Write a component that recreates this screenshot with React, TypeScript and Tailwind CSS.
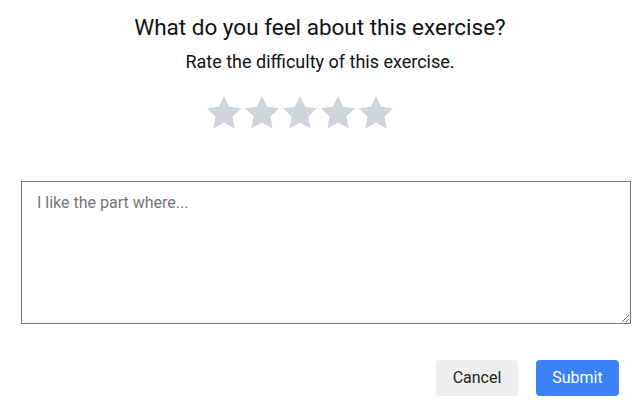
import { useState } from "react"

const STAR = "12,2 15.09,8.26 22,9.27 17,14.14 18.18,21.02 12,17.77 5.82,21.02 7,14.14 2,9.27 8.91,8.26"

function Star({ filled }: { filled: boolean }) {
  return (
    <svg viewBox="2 2 20 19.02" className="w-[34px] h-[32.3px]">
      <polygon points={STAR} fill={filled ? "#fbbf24" : "#d1d5db"} />
    </svg>
  )
}

export default function App() {
  const [rating, setRating] = useState(0)
  const [text, setText] = useState("")

  return (
    <div className="w-full min-h-[403px] bg-white font-['Roboto','Liberation_Sans',sans-serif] text-[#111]">
      <h1 className="pt-[12px] pr-1 text-center text-[22.5px] leading-[30px] font-normal">
        What do you feel about this exercise?
      </h1>
      <p className="mt-[7px] pr-1 text-center text-[18px] leading-[26px]">
        Rate the difficulty of this exercise.
      </p>

      <div className="mt-[21px] flex justify-center gap-1 pr-11">
        {[1, 2, 3, 4, 5].map((n) => (
          <button key={n} onClick={() => setRating(n)} className="block leading-none">
            <Star filled={n <= rating} />
          </button>
        ))}
      </div>

      <textarea
        value={text}
        onChange={(e) => setText(e.target.value)}
        placeholder="I like the part where..."
        className="mt-[53px] ml-[21px] block w-[610px] h-[143px] border border-[#767676] px-[15px] py-[9px] text-[16px] leading-[24px] placeholder:text-[#757575] outline-none"
      />

      <div className="mt-[36px] flex justify-end gap-[18px] pr-[25px]">
        <button className="w-[82px] h-[36px] rounded bg-[#eeeeee] text-[16px] text-[#222]">
          Cancel
        </button>
        <button className="w-[83px] h-[36px] rounded bg-[#3b82f6] text-[16px] text-white">
          Submit
        </button>
      </div>
    </div>
  )
}
